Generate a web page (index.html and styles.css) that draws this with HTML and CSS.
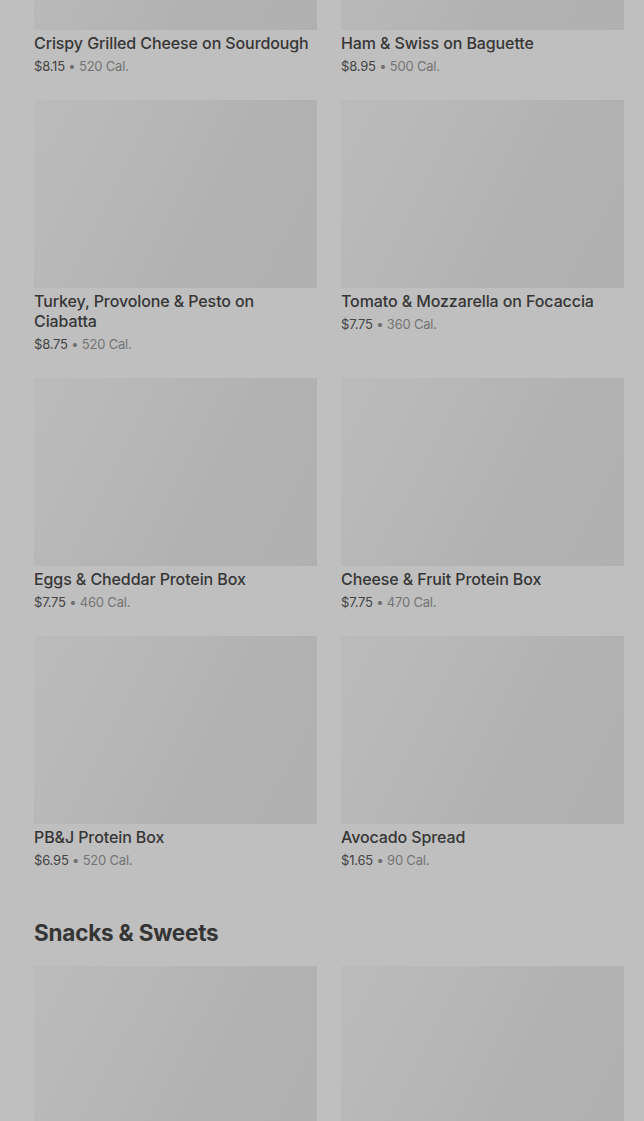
FILE: index.html
```html
<!DOCTYPE html>
<html lang="en">
<head>
<meta charset="utf-8">
<title>Menu</title>
<link rel="stylesheet" href="styles.css">
</head>
<body>
<main class="page">
  <section class="section first">
    <div class="grid">
      <div class="card"><div class="thumb"></div><div class="info"><div class="name">Crispy Grilled Cheese on Sourdough</div><div class="meta"><span class="price">$8.15</span> • <span class="cal">520 Cal.</span></div></div></div>
      <div class="card"><div class="thumb"></div><div class="info"><div class="name">Ham &amp; Swiss on Baguette</div><div class="meta"><span class="price">$8.95</span> • <span class="cal">500 Cal.</span></div></div></div>
      <div class="card"><div class="thumb"></div><div class="info"><div class="name">Turkey, Provolone &amp; Pesto on Ciabatta</div><div class="meta"><span class="price">$8.75</span> • <span class="cal">520 Cal.</span></div></div></div>
      <div class="card"><div class="thumb"></div><div class="info"><div class="name">Tomato &amp; Mozzarella on Focaccia</div><div class="meta"><span class="price">$7.75</span> • <span class="cal">360 Cal.</span></div></div></div>
      <div class="card"><div class="thumb"></div><div class="info"><div class="name">Eggs &amp; Cheddar Protein Box</div><div class="meta"><span class="price">$7.75</span> • <span class="cal">460 Cal.</span></div></div></div>
      <div class="card"><div class="thumb"></div><div class="info"><div class="name">Cheese &amp; Fruit Protein Box</div><div class="meta"><span class="price">$7.75</span> • <span class="cal">470 Cal.</span></div></div></div>
      <div class="card"><div class="thumb"></div><div class="info"><div class="name">PB&amp;J Protein Box</div><div class="meta"><span class="price">$6.95</span> • <span class="cal">520 Cal.</span></div></div></div>
      <div class="card"><div class="thumb"></div><div class="info"><div class="name">Avocado Spread</div><div class="meta"><span class="price">$1.65</span> • <span class="cal">90 Cal.</span></div></div></div>
    </div>
  </section>
  <section class="section">
    <h2 class="heading">Snacks &amp; Sweets</h2>
    <div class="grid">
      <div class="card"><div class="thumb"></div></div>
      <div class="card"><div class="thumb"></div></div>
    </div>
  </section>
</main>
</body>
</html>
```
FILE: styles.css
```css
html, body {
  margin: 0;
  padding: 0;
  background: #bfbfbf;
  font-family: Inter, "Noto Sans", sans-serif;
  color: #333333;
  overflow: hidden;
}
.page {
  padding: 0 20px 0 34px;
}
.section.first {
  margin-top: -158px;
}
.section {
  padding-bottom: 25px;
}
.grid {
  display: grid;
  grid-template-columns: 283px 283px;
  column-gap: 24px;
  row-gap: 25px;
}
.thumb {
  height: 188px;
  background: linear-gradient(117deg, #bbbbbb 0%, #b8b8b8 25%, #b5b5b5 45%, #b2b2b2 60%, #b0b0b0 100%);
}
.info {
  padding-top: 3px;
}
.name {
  font-size: 16px;
  font-weight: 500;
  line-height: 20px;
  color: #363636;
  letter-spacing: -0.1px;
}
.meta {
  margin-top: 4px;
  font-size: 13px;
  line-height: 18px;
  color: #6f6f6f;
  letter-spacing: -0.2px;
}
.price {
  color: #444444;
}
.cal {
  color: #747474;
}
.heading {
  margin: 25px 0 19px;
  font-size: 22.5px;
  line-height: 28px;
  font-weight: 700;
  color: #353535;
  letter-spacing: -0.2px;
}
```
